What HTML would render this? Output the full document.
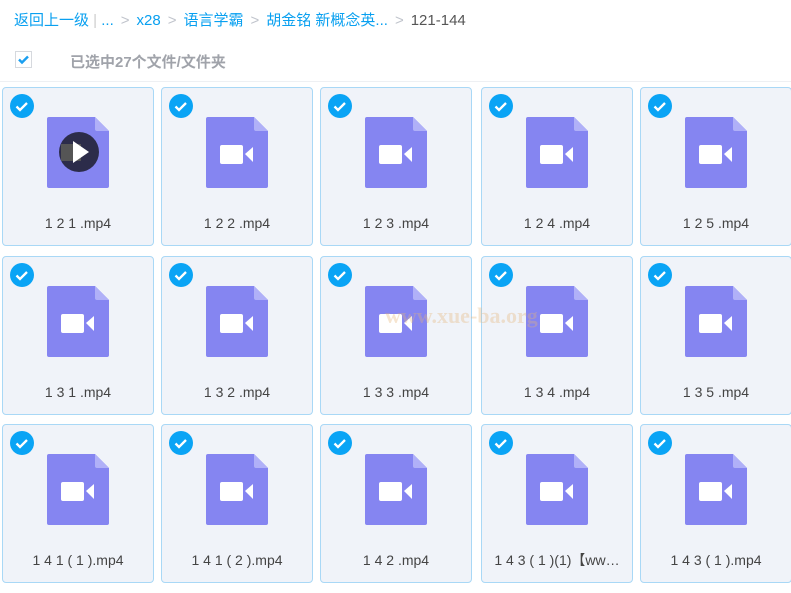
<!DOCTYPE html>
<html><head><meta charset="utf-8"><style>
body{margin:0;width:791px;height:593px;background:#fff;font-family:"Liberation Sans","Noto Sans CJK SC",sans-serif;overflow:hidden;position:relative}
.bc{position:absolute;left:14px;top:9px;font-size:15px;color:#09a0f0;white-space:nowrap}
.bc .g{color:#c0c4cc;margin:0 7px}
.bc .d{color:#555}
.sel{position:absolute;left:15px;top:51px;width:17px;height:17px;border:1px solid #d6d9de;box-sizing:border-box}
.selt{position:absolute;left:70px;top:51px;font-size:15px;color:#a0a3aa;font-weight:bold}
.line{position:absolute;left:0;right:0;top:81px;height:1px;background:#eef0f3}
.card{position:absolute;width:152px;height:159px;border:1px solid #a9d8f6;border-radius:4px;background:#f0f3f9;box-sizing:border-box}
.card .ck{position:absolute;left:7px;top:6px}
.card svg.f{position:absolute;left:44px;top:29px}
.card .n{position:absolute;left:0;right:0;top:126px;height:18px;line-height:18px;text-align:center;font-size:14px;color:#444;white-space:nowrap;overflow:hidden;padding:0 8px}
</style></head><body>
<div class="bc">返回上一级<span style="color:#ccc"> | </span>...<span class="g">&gt;</span>x28<span class="g">&gt;</span>语言学霸<span class="g">&gt;</span>胡金铭 新概念英...<span class="g">&gt;</span><span class="d">121-144</span></div>
<div class="sel"><svg width="17" height="17" viewBox="0 0 17 17" style="position:absolute;left:-1px;top:-1px"><path d="M4 8.5l3 3 6-6" stroke="#1a9ff0" stroke-width="2.4" fill="none"/></svg></div>
<div class="selt">已选中27个文件/文件夹</div>
<div class="line"></div>
<div id="g"></div>
<script>
var names=["1 2 1 .mp4","1 2 2 .mp4","1 2 3 .mp4","1 2 4 .mp4","1 2 5 .mp4","1 3 1 .mp4","1 3 2 .mp4","1 3 3 .mp4","1 3 4 .mp4","1 3 5 .mp4","1 4 1 ( 1 ).mp4","1 4 1 ( 2 ).mp4","1 4 2 .mp4","1 4 3 ( 1 )(1)【ww…","1 4 3 ( 1 ).mp4"];
var xs=[2,161,320,481,640],ys=[87,256,424],h="";
names.forEach(function(n,i){var x=xs[i%5],y=ys[Math.floor(i/5)];
var play=i==0?'<circle cx="32" cy="35" r="20" fill="#2c2c4a"/><rect x="14" y="27" width="20" height="17" fill="#555"/><path d="M26 24v22l16-11z" fill="#fff"/>':'<rect x="14" y="28" width="23" height="19" rx="2" fill="#fff"/><path d="M39 37l8-7v15z" fill="#fff"/>';
h+='<div class="card" style="left:'+x+'px;top:'+y+'px"><svg class="ck" width="24" height="24"><circle cx="12" cy="12" r="12" fill="#0aa4f5"/><path d="M6.5 12.5l3.5 3.5 7-7" stroke="#fff" stroke-width="2.3" fill="none"/></svg><svg class="f" width="62" height="71" viewBox="0 0 62 71"><path d="M2 0h46l14 14v55a2 2 0 0 1-2 2H2a2 2 0 0 1-2-2V2a2 2 0 0 1 2-2z" fill="#8585f1"/><path d="M48 0l14 14H50a2 2 0 0 1-2-2z" fill="#b0b0f8"/>'+play+'</svg><div class="n">'+n+'</div></div>';});
document.getElementById('g').innerHTML=h;
</script>
<div style="position:absolute;left:385px;top:303px;font-family:'Liberation Serif',serif;font-size:22px;font-weight:bold;color:rgba(230,180,120,0.35)">www.xue-ba.org</div>
</body></html>
